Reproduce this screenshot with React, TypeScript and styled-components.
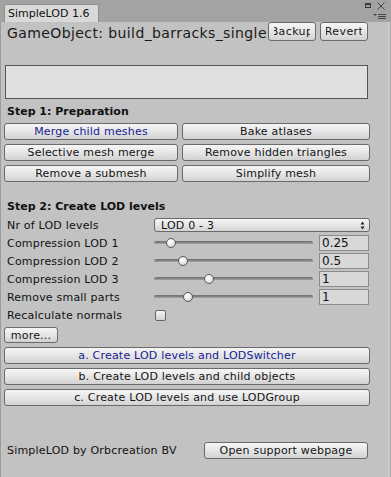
import React from 'react'
import styled, { createGlobalStyle, css } from 'styled-components'

const GlobalStyle = createGlobalStyle`
  html, body {
    margin: 0;
    padding: 0;
    background: #a3a3a3;
  }
  body {
    font-family: "DejaVu Sans", Verdana, sans-serif;
    font-size: 11px;
    color: #111;
  }
`

const Window = styled.div`
  width: 391px;
  height: 477px;
  display: flex;
  flex-direction: column;
  background: #a3a3a3;
  overflow: hidden;
`

const TopBar = styled.div`
  height: 22px;
  display: flex;
  align-items: flex-end;
  padding-left: 4px;
  flex-shrink: 0;
`

const Tab = styled.div`
  width: 95px;
  height: 18px;
  box-sizing: border-box;
  background: #d9d9d9;
  border: 1px solid #8f8f8f;
  border-bottom: none;
  border-radius: 2px 2px 0 0;
  padding-left: 3px;
  line-height: 17px;
  font-size: 11px;
  color: #111;
  white-space: nowrap;
`

const WindowIcons = styled.svg`
  margin-left: auto;
  margin-right: 3px;
  align-self: flex-start;
`

const Panel = styled.div`
  flex: 1;
  display: flex;
  flex-direction: column;
  background: #c2c2c2;
  border-left: 1px solid #9c9c9c;
  border-right: 1px solid #a8a8a8;
  box-shadow: inset -2px 0 0 #c8c8c8;
  padding: 0 21px 0 3px;
`

const Header = styled.div`
  display: flex;
  align-items: center;
  height: 19px;
`

const Title = styled.div`
  flex: 1;
  min-width: 0;
  overflow: hidden;
  white-space: nowrap;
  font-size: 14px;
  letter-spacing: 0.4px;
  padding: 3px 0 0 3px;
  color: #1a1a1a;
`

const buttonLook = css`
  box-sizing: border-box;
  display: flex;
  align-items: center;
  justify-content: center;
  overflow: hidden;
  white-space: nowrap;
  border: 1px solid #6a6a6a;
  border-radius: 3px;
  background: linear-gradient(#f6f6f6, #e4e4e4 55%, #d2d2d2);
  font-family: "DejaVu Sans", Verdana, sans-serif;
  font-size: 11px;
  letter-spacing: 0.2px;
  padding: 0 6px;
  margin: 0;
  cursor: pointer;
`

const Button = styled.button<{ $active?: boolean; $height?: number }>`
  ${buttonLook};
  height: ${p => p.$height ?? 17}px;
  color: ${p => (p.$active ? '#161c95' : '#141414')};
`

const ButtonText = styled.span`
  flex: 1;
  min-width: 0;
  display: flex;
  justify-content: center;
  overflow: hidden;
`

const HeaderButtons = styled.div`
  display: flex;
  gap: 4px;
  margin-right: 1px;
`

const SmallButton = styled(Button)`
  width: 48px;
  flex-shrink: 0;
  padding: 0 5px;
  letter-spacing: 0.4px;
`

const TextBox = styled.div`
  margin: 24px 1px 0 1px;
  height: 34px;
  box-sizing: border-box;
  background: #e0e0e0;
  border: 1px solid #555;
`

const Heading = styled.div<{ $gap: number }>`
  margin-top: ${p => p.$gap}px;
  height: 16px;
  line-height: 16px;
  padding-left: 3px;
  font-weight: bold;
  font-size: 11px;
  color: #111;
`

const ToolGrid = styled.div`
  margin-top: 3px;
  display: grid;
  grid-template-columns: 174px 188px;
  grid-auto-rows: 17px;
  gap: 4px;
`

const Row = styled.div<{ $gap: number; $height: number }>`
  display: flex;
  align-items: center;
  margin-top: ${p => p.$gap}px;
  height: ${p => p.$height}px;
`

const Label = styled.div`
  width: 150px;
  flex-shrink: 0;
  padding-left: 3px;
  box-sizing: border-box;
  white-space: nowrap;
  color: #111;
  letter-spacing: 0.2px;
`

const Dropdown = styled.div`
  ${buttonLook};
  flex: 1;
  height: 14px;
  justify-content: space-between;
  padding: 0 4px 0 6px;
  margin-right: -1px;
  color: #111;
  cursor: default;
`

const SliderTrack = styled.div`
  position: relative;
  flex: 1;
  height: 16px;
  &::before {
    content: '';
    position: absolute;
    left: 0;
    right: 0;
    top: 6px;
    height: 4px;
    border-radius: 2px;
    background: linear-gradient(#6e6e6e, #8c8c8c 50%, #a6a6a6 75%, #e2e2e2);
  }
`

const Thumb = styled.div`
  position: absolute;
  top: 3px;
  width: 10px;
  height: 10px;
  box-sizing: border-box;
  border-radius: 50%;
  border: 1px solid #5a5a5a;
  background: radial-gradient(circle at 40% 35%, #ffffff, #e8e8e8 50%, #bdbdbd);
`

const NumberField = styled.div`
  width: 50px;
  height: 16px;
  box-sizing: border-box;
  margin-left: 6px;
  border: 1px solid #8a8a8a;
  background: #d8d8d8;
  font-size: 12px;
  line-height: 14px;
  padding-left: 2px;
  color: #111;
`

const Checkbox = styled.div`
  width: 11px;
  height: 11px;
  box-sizing: border-box;
  margin-left: 1px;
  border: 1px solid #666;
  border-radius: 2px;
  background: linear-gradient(#f4f4f4, #d4d4d4);
`

const Footer = styled.div`
  display: flex;
  align-items: center;
  margin-top: 36px;
  height: 17px;
`

const FooterText = styled.div`
  padding-left: 3px;
  color: #111;
  letter-spacing: 0.2px;
`

const SupportButton = styled(Button)`
  margin-left: auto;
  margin-right: 1px;
  width: 164px;
`

const sliders = [
  { label: 'Compression LOD 1', pos: 0.08, value: '0.25' },
  { label: 'Compression LOD 2', pos: 0.16, value: '0.5' },
  { label: 'Compression LOD 3', pos: 0.335, value: '1' },
  { label: 'Remove small parts', pos: 0.197, value: '1' },
]

const prepButtons = [
  'Merge child meshes',
  'Bake atlases',
  'Selective mesh merge',
  'Remove hidden triangles',
  'Remove a submesh',
  'Simplify mesh',
]

const lodButtons = [
  'a. Create LOD levels and LODSwitcher',
  'b. Create LOD levels and child objects',
  'c. Create LOD levels and use LODGroup',
]

const App = () => {
  return (
    <Window>
      <GlobalStyle />
      <TopBar>
        <Tab>SimpleLOD 1.6</Tab>
        <WindowIcons width="24" height="21" viewBox="0 0 24 21">
          <rect x="1.5" y="3.5" width="5" height="4" fill="none" stroke="#3a3a3a" />
          <rect x="1" y="3" width="6" height="2" fill="#3a3a3a" />
          <path d="M13.5 2.5 L20.5 9.5 M20.5 2.5 L13.5 9.5" stroke="#444" strokeWidth="1" />
          <path d="M9 14 L13 14 L11 16 Z" fill="#444" />
          <path d="M14 14.5 H22 M14 16.5 H22 M14 18.5 H22" stroke="#444" strokeWidth="1" />
        </WindowIcons>
      </TopBar>
      <Panel>
        <Header>
          <Title>GameObject: build_barracks_single</Title>
          <HeaderButtons>
            <SmallButton $height={19}><ButtonText>Backup</ButtonText></SmallButton>
            <SmallButton $height={19}><ButtonText>Revert</ButtonText></SmallButton>
          </HeaderButtons>
        </Header>
        <TextBox />

        <Heading $gap={5}>Step 1: Preparation</Heading>
        <ToolGrid>
          {prepButtons.map((b, i) => (
            <Button key={b} $active={i === 0}>{b}</Button>
          ))}
        </ToolGrid>

        <Heading $gap={17}>Step 2: Create LOD levels</Heading>
        <Row $gap={3} $height={14}>
          <Label>Nr of LOD levels</Label>
          <Dropdown>
            <span>LOD 0 - 3</span>
            <svg width="5" height="9" viewBox="0 0 5 9">
              <path d="M2.5 0.5 L4.5 3.5 H0.5 Z M2.5 8.5 L4.5 5.5 H0.5 Z" fill="#222" />
            </svg>
          </Dropdown>
        </Row>
        {sliders.map((s, i) => (
          <Row key={s.label} $gap={i === 0 ? 3 : 2} $height={16}>
            <Label>{s.label}</Label>
            <SliderTrack>
              <Thumb style={{ left: `calc(${s.pos} * (100% - 10px))` }} />
            </SliderTrack>
            <NumberField>{s.value}</NumberField>
          </Row>
        ))}
        <Row $gap={3} $height={14}>
          <Label>Recalculate normals</Label>
          <Checkbox />
        </Row>
        <Row $gap={5} $height={16}>
          <Button $height={16} style={{ width: 54 }}>more...</Button>
        </Row>
        {lodButtons.map((b, i) => (
          <Row key={b} $gap={4} $height={17}>
            <Button $active={i === 0} style={{ flex: 1, marginRight: -1 }}>{b}</Button>
          </Row>
        ))}

        <Footer>
          <FooterText>SimpleLOD by Orbcreation BV</FooterText>
          <SupportButton>Open support webpage</SupportButton>
        </Footer>
      </Panel>
    </Window>
  )
}

export default App
